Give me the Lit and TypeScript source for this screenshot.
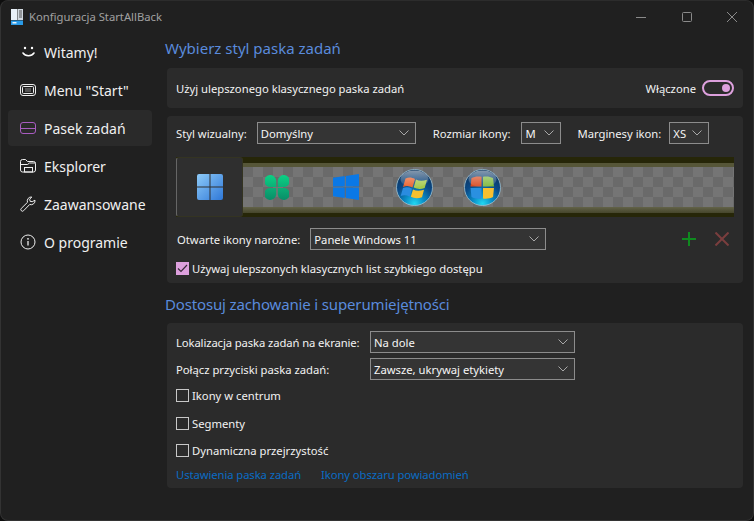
import { LitElement, html, css, svg } from "lit";
import { customElement, state } from "lit/decorators.js";

const chevron = html`<svg class="chev" width="10" height="6" viewBox="0 0 10 6"><path d="M.5.5 5 5 9.500.5" fill="none" stroke="#a8a8a8" stroke-width="1"/></svg>`;

const navIcons: Record<string, unknown> = {
  smile: svg`<circle cx="5" cy="4" r="1.200" fill="#fff"/><circle cx="12" cy="4" r="1.200" fill="#fff"/><path d="M3 9c1.300 2 3.300 2.700 5.500 2.700S12.700 11 14 9" fill="none" stroke="#fff" stroke-width="1.500" stroke-linecap="round"/>`,
  start: svg`<rect x=".5" y="2.500" width="15" height="11" rx="2.500" fill="none" stroke="#eee"/><rect x="2.500" y="4.500" width="11" height="7" rx="1" fill="none" stroke="#eee"/><path d="M5.500 6.500h1v1h-1zM7.500 6.500h1v1h-1zM9.500 6.500h1v1h-1zM5.500 8.500h1v1h-1zM7.500 8.500h1v1h-1zM9.500 8.500h1v1h-1z" fill="#eee"/>`,
  taskbar: svg`<rect x=".5" y="2.500" width="15" height="11" rx="2.500" fill="none" stroke="#a85cc0"/><path d="M.5 8.500h15" stroke="#a85cc0"/>`,
  folder: svg`<path d="M.5 12V3.500a2 2 0 0 1 2-2h3l2 2h6a2 2 0 0 1 2 2V12a2 2 0 0 1-2 2h-11a2 2 0 0 1-2-2Z" fill="none" stroke="#eee"/><path d="M.5 6.500h7l2-1.500h6" fill="none" stroke="#eee"/><rect x="4.500" y="9.500" width="8" height="4.500" fill="none" stroke="#eee"/>`,
  wrench: svg`<path d="M15 4.200a4 4 0 0 1-5.300 4.300L3.600 14.700a1.500 1.500 0 0 1-2.300-2.300l6.200-6.100A4 4 0 0 1 11.800 1L9.700 3.200l.4 2.100 2.100.4Z" fill="none" stroke="#eee" stroke-linejoin="round"/>`,
  info: svg`<circle cx="8" cy="8" r="7" fill="none" stroke="#eee"/><path d="M8 7v4.500" stroke="#eee" stroke-width="1.300"/><circle cx="8" cy="4.800" r=".9" fill="#eee"/>`,
};

const navItems = [
  { id: "smile", label: "Witamy!" },
  { id: "start", label: 'Menu "Start"' },
  { id: "taskbar", label: "Pasek zadań", active: true },
  { id: "folder", label: "Eksplorer" },
  { id: "wrench", label: "Zaawansowane" },
  { id: "info", label: "O programie" },
];

const win11 = html`<svg width="26" height="26" viewBox="0 0 26 26">
  <defs><linearGradient id="w11" x1="0" y1="0" x2="1" y2="1"><stop offset="0" stop-color="#8ecbf8"/><stop offset="1" stop-color="#2f78d8"/></linearGradient></defs>
  <path d="M2 0H12.500V12.500H0V2A2 2 0 0 1 2 0ZM13.500 0H24A2 2 0 0 1 26 2V12.500H13.500ZM0 13.500H12.500V26H2A2 2 0 0 1 0 24ZM13.500 13.500H26V24A2 2 0 0 1 24 26H13.500Z" fill="url(#w11)"/>
</svg>`;

const clover = html`<svg width="24" height="25" viewBox="0 0 24 25">
  <defs><linearGradient id="cl" x1="0" y1="0" x2="0" y2="1"><stop offset="0" stop-color="#0cd084"/><stop offset="1" stop-color="#0a8d68"/></linearGradient></defs>
  <path d="M11.200 12H6A6 6 0 1 1 11.200 5.500ZM12.800 12V5.500A6 6 0 1 1 18 12ZM11.200 13V19.500A6 6 0 1 1 6 13ZM12.800 13H18A6 6 0 1 1 12.800 19.500Z" fill="url(#cl)"/>
</svg>`;

const win10 = html`<svg width="26" height="26" viewBox="0 0 26 26">
  <path d="M0 3.700 11.800 2V12.500H0ZM12.800 1.900 26 0V12.500H12.800ZM0 13.500H11.800V24L0 22.300ZM12.800 13.500H26V26L12.800 24.100Z" fill="#0a78e6"/>
</svg>`;

const orbDefs = (id: string) => svg`<defs>
  <radialGradient id="${id}b" cx=".5" cy=".95" r=".95"><stop offset="0" stop-color="#22d8f0"/><stop offset=".28" stop-color="#0a8fc8"/><stop offset=".6" stop-color="#0a4a88"/><stop offset="1" stop-color="#0c3058"/></radialGradient>
  <linearGradient id="${id}g" x1="0" y1="0" x2="0" y2="1"><stop offset="0" stop-color="#fff" stop-opacity=".5"/><stop offset="1" stop-color="#fff" stop-opacity=".04"/></linearGradient>
</defs>`;

const orbVista = html`<svg width="37" height="37" viewBox="0 0 37 37">
  ${orbDefs("v")}
  <circle cx="18.500" cy="18.500" r="18" fill="url(#vb)" stroke="#9fc4d4" stroke-width=".8"/>
  <path d="M9.500 9.500c3-1.500 6-1.500 9.500.5l-2.500 8.500c-3-1.800-6-2-9.500-.5Z" fill="#e8602a"/>
  <path d="M20 10.500c3 1.500 6.500 1.700 11 .2l-2.300 8.300c-4 1.500-7.500 1.300-11-.4Z" fill="#a4c84a"/>
  <path d="M7 19c3-1.200 6-1 9 .7l-2.300 8c-3-1.700-6-1.900-9-.7Z" fill="#2a8ce0"/>
  <path d="M17 20.500c3.200 1.700 6.500 1.800 11 .2l-2 7.500c-4 1.500-8 1.300-11.200-.4Z" fill="#f4c030"/>
  <ellipse cx="18.500" cy="10" rx="14" ry="8.500" fill="url(#vg)"/>
</svg>`;

const orbSeven = html`<svg width="37" height="37" viewBox="0 0 37 37">
  ${orbDefs("s")}
  <circle cx="18.500" cy="18.500" r="18" fill="url(#sb)" stroke="#9fc4d4" stroke-width=".8"/>
  <path d="M7.500 9C10 7.500 14 7 17.500 7.700V17.500H6.500Z" fill="#d84a20"/>
  <path d="M19 7.700C22.500 7 26.500 7.500 29 9L30 17.500H19Z" fill="#7eb83a"/>
  <path d="M6.500 19H17.500V29.500C14 30 10 29.500 7.500 28Z" fill="#2a90e0"/>
  <path d="M19 19H30L29 28C26.500 29.500 22.500 30 19 29.500Z" fill="#f8c030"/>
  <ellipse cx="18.500" cy="10" rx="14" ry="8.500" fill="url(#sg)"/>
</svg>`;

@customElement("app-root")
export class AppRoot extends LitElement {
  @state() private enabled = true;

  static styles = css`
    :host {
      display: block;
      width: 754px;
      height: 521px;
      background: #0e0e0e;
      font-family: "Noto Sans", "Open Sans", sans-serif;
      font-size: 11.25px;
      color: #f2f2f2;
      overflow: hidden;
    }
    .window {
      box-sizing: border-box;
      height: 521px;
      background: #202020;
      border-radius: 8px;
      border: 1px solid #333;
      border-top-color: #2c2c2c;
      display: flex;
      flex-direction: column;
      overflow: hidden;
    }
    .titlebar {
      height: 31px;
      flex: none;
      display: flex;
      align-items: center;
      padding-left: 10px;
      gap: 6px;
      color: #a0a0a0;
      font-size: 11.25px;
    }
    .title {
      flex: 1;
    }
    .controls {
      display: flex;
      margin-right: -2px;
    }
    .ctl {
      width: 45.500px;
      height: 30px;
      display: flex;
      align-items: center;
      justify-content: center;
    }
    .body {
      flex: 1;
      display: flex;
      min-height: 0;
    }
    nav {
      width: 151px;
      flex: none;
      padding: 2px 0 0 7px;
      box-sizing: border-box;
      margin-right: 5px;
      display: flex;
      flex-direction: column;
    }
    .nav-item {
      height: 36px;
      margin-bottom: 2px;
      width: 144px;
      display: flex;
      align-items: center;
      gap: 8px;
      padding-left: 12px;
      box-sizing: border-box;
      border-radius: 4px;
      font-size: 14px;
      color: #f0f0f0;
    }
    .nav-item.active {
      background: #2a2a2a;
    }
    main {
      flex: 1;
      padding: 0 10px 0 10px;
      min-width: 0;
    }
    h2 {
      margin: 0 0 0 -2px;
      font-weight: 400;
      font-size: 15px;
      line-height: 20px;
      color: #5a8bdc;
    }
    .h-first {
      height: 36px;
      padding-bottom: 4px;
      box-sizing: border-box;
      display: flex;
      align-items: center;
    }
    .h-second {
      height: 24px;
      margin-top: 9px;
      margin-bottom: 7px;
      display: flex;
      align-items: center;
    }
    .h-second h2 {
      letter-spacing: -0.15px;
    }
    .card {
      background: #2b2b2b;
      border-radius: 4px;
      padding: 0 9px;
    }
    .card-toggle {
      height: 40px;
      display: flex;
      align-items: center;
      justify-content: space-between;
      margin-bottom: 8px;
    }
    .toggle-wrap {
      display: flex;
      align-items: center;
      gap: 6px;
    }
    .toggle {
      box-sizing: border-box;
      width: 32px;
      height: 16px;
      border: 2px solid #dda0dd;
      border-radius: 8px;
      display: flex;
      align-items: center;
      justify-content: flex-end;
      padding-right: 2px;
    }
    .knob {
      width: 8px;
      height: 8px;
      border-radius: 50%;
      background: #dda0dd;
    }
    .card-style {
      height: 167px;
      padding-top: 6px;
      box-sizing: border-box;
    }
    .row {
      display: flex;
      align-items: center;
    }
    .select {
      box-sizing: border-box;
      height: 22px;
      background: #343434;
      border: 1px solid #8c8c8c;
      display: flex;
      align-items: center;
      justify-content: space-between;
      padding: 0 6px 0 3px;
      color: #f6f6f6;
    }
    .s-style { width: 159px; margin: 0 17px 0 10px; }
    .s-size { width: 40px; margin: 0 16px 0 11px; }
    .s-margin { width: 40px; margin-left: 8px; }
    .s-corner { width: 236px; margin-left: 10px; }
    .s-place { width: 205px; margin-left: 0; }
    .corner-label {
      padding-left: 1px;
    }
    .preview {
      margin-top: 13px;
      height: 60px;
      width: 558px;
      display: flex;
      background: #262608;
    }
    .tile {
      width: 67px;
      flex: none;
      box-sizing: border-box;
      background: #2f2f2f;
      border: 1px solid #343422;
      border-left-color: #666;
      border-radius: 3px;
      display: flex;
      align-items: center;
      justify-content: center;
    }
    .strip {
      flex: 1;
      display: flex;
      flex-direction: column;
    }
    .edge-top {
      height: 6px;
      flex: none;
    }
    .rim {
      height: 4px;
      flex: none;
      background: #565638;
    }
    .rim.low {
      height: 6px;
      background: linear-gradient(#626248, #46462c);
    }
    .edge-bottom {
      height: 4px;
      flex: none;
    }
    .checker {
      flex: 1;
      display: flex;
      align-items: center;
      background-color: #6a6a6a;
      background-image: conic-gradient(#757575 25%, transparent 0 50%, #757575 0 75%, transparent 0);
      background-size: 20px 20px;
    }
    .cell {
      width: 68.500px;
      flex: none;
      display: flex;
      justify-content: center;
    }
    .corner-row {
      margin-top: 11px;
    }
    .spacer {
      flex: 1;
    }
    .corner-actions {
      display: flex;
      gap: 19px;
      padding-right: 5px;
    }
    .check {
      display: flex;
      align-items: center;
      gap: 3px;
      height: 16px;
    }
    .box {
      box-sizing: border-box;
      width: 13px;
      height: 13px;
      border: 1px solid #c8c8c8;
      flex: none;
    }
    .box.on {
      background: #dda0dd;
      border: none;
      display: flex;
      align-items: center;
      justify-content: center;
    }
    .quick {
      margin-top: 10px;
    }
    .card-behave {
      height: 165px;
      padding-top: 8px;
      box-sizing: border-box;
    }
    .place-row {
      margin-bottom: 5px;
    }
    .place-label {
      width: 194px;
      flex: none;
    }
    .tight {
      letter-spacing: -0.1px;
    }
    .behave-check {
      height: 27.500px;
    }
    .first-check {
      margin-top: 2px;
    }
    .links {
      display: flex;
      gap: 20px;
      margin-top: 2px;
      color: #0a6cc4;
      letter-spacing: -0.08px;
    }
  `;

  private renderSelect(cls: string, value: string) {
    return html`<div class="select ${cls}"><span>${value}</span>${chevron}</div>`;
  }

  private renderCheck(label: string, cls = "") {
    return html`<div class="check ${cls}"><span class="box"></span><span>${label}</span></div>`;
  }

  render() {
    return html`
      <div class="window">
        <div class="titlebar">
          <svg width="12" height="16" viewBox="0 0 12 16">
            <rect x="0" y="0" width="6.500" height="11" fill="#e8f0f8"/>
            <rect x="7" y="0" width="5" height="11" fill="#d0d8e0"/>
            <path d="M8 2h3M8 4h3M8 6h3M8 8h3" stroke="#555" stroke-width="1"/>
            <rect x="0" y="11.500" width="12" height="4.500" fill="#2a9be8"/>
            <rect x="1.500" y="13" width="4" height="1.500" fill="#e8f4fc"/>
          </svg>
          <span class="title">Konfiguracja StartAllBack</span>
          <div class="controls">
            <div class="ctl"><svg width="10" height="10"><path d="M0 5.500h10" stroke="#8a8a8a"/></svg></div>
            <div class="ctl"><svg width="10" height="10"><rect x=".5" y=".5" width="9" height="9" rx="1" fill="none" stroke="#8a8a8a"/></svg></div>
            <div class="ctl"><svg width="10" height="10"><path d="M0 0l10 10M10 0 0 10" stroke="#8a8a8a"/></svg></div>
          </div>
        </div>
        <div class="body">
          <nav>
            ${navItems.map(
              (item) => html`<div class="nav-item ${item.active ? "active" : ""}">
                <svg width="16" height="16" viewBox="0 0 16 16">${navIcons[item.id]}</svg>
                <span>${item.label}</span>
              </div>`
            )}
          </nav>
          <main>
            <div class="h-first"><h2>Wybierz styl paska zadań</h2></div>
            <div class="card card-toggle">
              <span>Użyj ulepszonego klasycznego paska zadań</span>
              <div class="toggle-wrap">
                <span>Włączone</span>
                <div class="toggle"><div class="knob"></div></div>
              </div>
            </div>
            <div class="card card-style">
              <div class="row">
                <span>Styl wizualny:</span>
                ${this.renderSelect("s-style", "Domyślny")}
                <span>Rozmiar ikony:</span>
                ${this.renderSelect("s-size", "M")}
                <span>Marginesy ikon:</span>
                ${this.renderSelect("s-margin", "XS")}
              </div>
              <div class="preview">
                <div class="tile">${win11}</div>
                <div class="strip">
                  <div class="edge-top"></div>
                  <div class="rim"></div>
                  <div class="checker">
                    <div class="cell">${clover}</div>
                    <div class="cell">${win10}</div>
                    <div class="cell">${orbVista}</div>
                    <div class="cell">${orbSeven}</div>
                  </div>
                  <div class="rim low"></div>
                  <div class="edge-bottom"></div>
                </div>
              </div>
              <div class="row corner-row">
                <span class="corner-label">Otwarte ikony narożne:</span>
                ${this.renderSelect("s-corner", "Panele Windows 11")}
                <div class="spacer"></div>
                <div class="corner-actions">
                  <svg width="14" height="14"><path d="M7 0v14M0 7h14" stroke="#0f8a1f" stroke-width="2"/></svg>
                  <svg width="14" height="14"><path d="M.5.5l13 13M13.500.5l-13 13" stroke="#7a3e3e" stroke-width="2"/></svg>
                </div>
              </div>
              <div class="check quick">
                <span class="box on"><svg width="11" height="9" viewBox="0 0 11 9"><path d="M1 4.500 4 7.500 10 1" fill="none" stroke="#3a2a3a" stroke-width="1.200"/></svg></span>
                <span>Używaj ulepszonych klasycznych list szybkiego dostępu</span>
              </div>
            </div>
            <div class="h-second"><h2>Dostosuj zachowanie i superumiejętności</h2></div>
            <div class="card card-behave">
              <div class="row place-row">
                <span class="place-label tight">Lokalizacja paska zadań na ekranie:</span>
                ${this.renderSelect("s-place", "Na dole")}
              </div>
              <div class="row">
                <span class="place-label">Połącz przyciski paska zadań:</span>
                ${this.renderSelect("s-place", "Zawsze, ukrywaj etykiety")}
              </div>
              ${this.renderCheck("Ikony w centrum", "behave-check first-check")}
              ${this.renderCheck("Segmenty", "behave-check")}
              ${this.renderCheck("Dynamiczna przejrzystość", "behave-check")}
              <div class="links">
                <span>Ustawienia paska zadań</span>
                <span>Ikony obszaru powiadomień</span>
              </div>
            </div>
          </main>
        </div>
      </div>
    `;
  }
}
